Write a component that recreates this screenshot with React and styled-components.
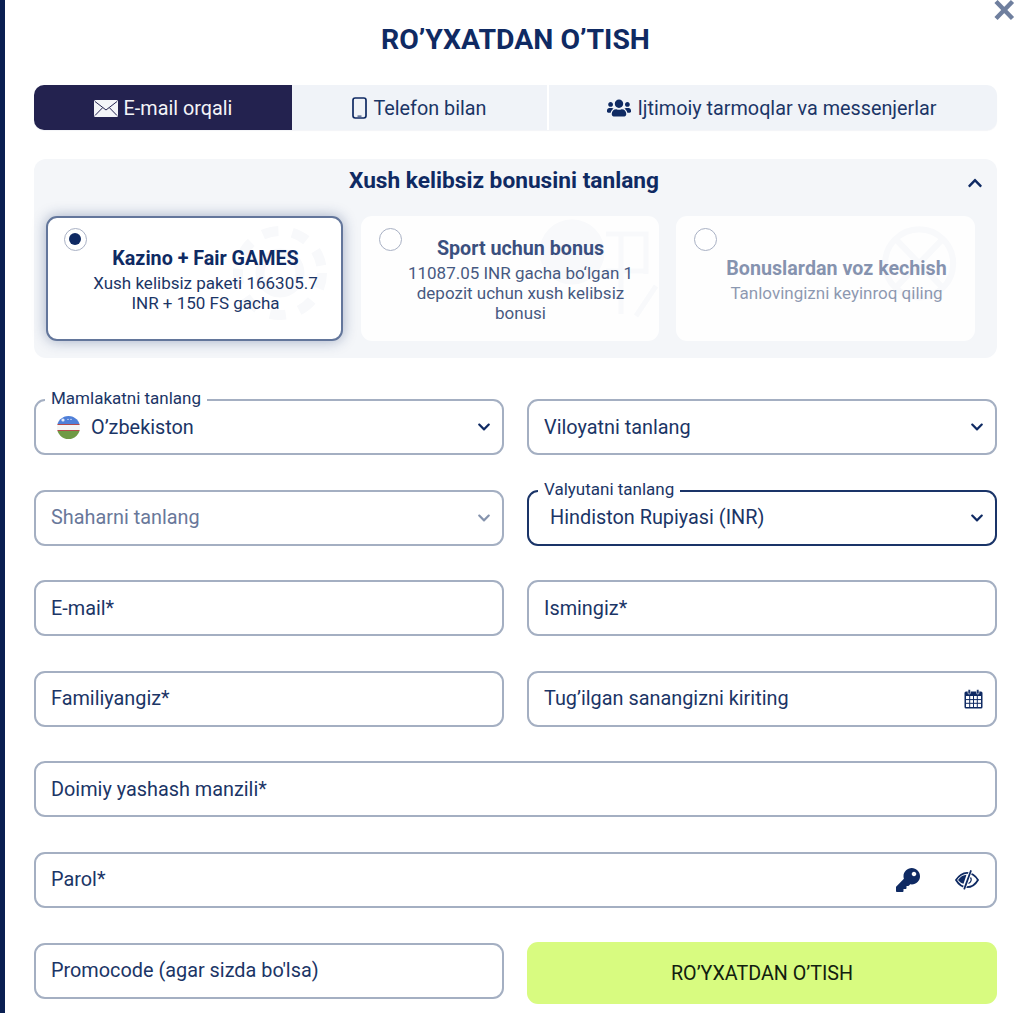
import React from "react";
import styled, { createGlobalStyle } from "styled-components";
import { FaUsers, FaKey, FaChevronDown, FaChevronUp } from "react-icons/fa";

const navy = "#0f2a63";

const GlobalStyle = createGlobalStyle`
  html, body {
    margin: 0;
    height: 100%;
    background: #ffffff;
  }
  body {
    font-family: Roboto, "Liberation Sans", sans-serif;
    color: ${navy};
    overflow: hidden;
  }
  * {
    box-sizing: border-box;
  }
`;

const Page = styled.div`
  display: flex;
  height: 1013px;
`;

const SideEdge = styled.div`
  width: 5px;
  background: #0a1f52;
  flex-shrink: 0;
`;

const Modal = styled.div`
  position: relative;
  flex: 1;
  padding: 0 27px 0 29px;
`;

const CloseButton = styled.button`
  position: absolute;
  top: 0;
  right: 9px;
  width: 22px;
  height: 22px;
  padding: 0;
  border: none;
  background: none;
  color: #6f7f9e;
`;

const Title = styled.h1`
  margin: 0;
  height: 85px;
  padding-top: 23px;
  font-size: 28.4px;
  line-height: 34px;
  font-weight: 700;
  text-align: center;
  letter-spacing: 0;
`;

const Tabs = styled.div`
  display: grid;
  grid-template-columns: 258px 255px 448px;
  column-gap: 0;
  height: 45px;
  border-radius: 10px;
  background: #f0f3f8;
  overflow: hidden;
  box-shadow: 0 1px 1px rgba(15, 42, 99, 0.05);
`;

const Tab = styled.div`
  display: flex;
  align-items: center;
  justify-content: center;
  gap: 6px;
  padding-top: 1px;
  font-size: 19.8px;
  background: ${(p) => (p.$active ? "#23224f" : "transparent")};
  color: ${(p) => (p.$active ? "#f3f4f8" : "#1b3566")};
  border-left: ${(p) => (p.$divided ? "2px solid #ffffff" : "none")};
`;

const BonusPanel = styled.section`
  margin-top: 29px;
  height: 199px;
  padding: 0 22px 0 12px;
  border-radius: 12px;
  background: #f4f6f9;
`;

const BonusHeader = styled.div`
  position: relative;
  height: 57px;
  padding-top: 6px;
  padding-right: 13px;
  font-size: 22.7px;
  line-height: 32px;
  font-weight: 700;
  text-align: center;
`;

const CollapseIcon = styled.span`
  position: absolute;
  right: -8px;
  top: 16px;
  font-size: 16px;
  line-height: 16px;
`;

const Cards = styled.div`
  display: grid;
  grid-template-columns: 297px 298px 299px;
  justify-content: space-between;
`;

const Card = styled.div`
  position: relative;
  height: 125px;
  padding: ${(p) => p.$top}px 0 0 22px;
  background: ${(p) => (p.$selected ? "#ffffff" : "rgba(255, 255, 255, 0.85)")};
  border: ${(p) => (p.$selected ? "2px solid #63769b" : "none")};
  border-radius: 11px;
  box-shadow: ${(p) => (p.$selected ? "0 0 14px rgba(30, 55, 110, 0.38)" : "none")};
  text-align: center;
  overflow: hidden;
`;

const Watermark = styled.svg`
  position: absolute;
  top: 0;
  left: ${(p) => p.$left}px;
  width: 125px;
  height: 125px;
  color: #f8f9fb;
`;

const Radio = styled.span`
  position: absolute;
  top: ${(p) => (p.$selected ? "10px" : "12px")};
  left: ${(p) => (p.$selected ? "16px" : "18px")};
  width: 23px;
  height: 23px;
  border: 1.5px solid #a9b1c4;
  border-radius: 50%;
  background: #ffffff;

  &::after {
    content: "";
    display: ${(p) => (p.$selected ? "block" : "none")};
    width: 12px;
    height: 12px;
    margin: 4px;
    border-radius: 50%;
    background: ${navy};
  }
`;

const CardBody = styled.div`
  position: relative;
  opacity: ${(p) => p.$fade};
`;

const CardTitle = styled.div`
  font-size: 19.7px;
  line-height: 24px;
  font-weight: 700;
`;

const CardText = styled.div`
  margin-top: 2px;
  font-size: 17px;
  line-height: 20px;
  color: #1b3566;
`;

const FormGrid = styled.form`
  display: grid;
  grid-template-columns: 470px 470px;
  grid-auto-rows: 56px;
  column-gap: 23px;
  row-gap: 34.6px;
  margin-top: 41px;
`;

const Field = styled.div`
  position: relative;
  display: flex;
  align-items: center;
  gap: 11px;
  height: 56px;
  padding: 0 15px;
  grid-column: ${(p) => (p.$wide ? "1 / -1" : "auto")};
  border: 2px solid ${(p) => (p.$focused ? "#1a3468" : "#a4afc2")};
  border-radius: 11px;
  font-size: 19.85px;
  color: ${(p) => (p.$muted ? "#69789a" : "#1b3566")};
  background: #ffffff;
`;

const FieldValue = styled.span`
  flex: 1;
  padding-left: ${(p) => p.$indent || 0}px;
`;

const Legend = styled.span`
  position: absolute;
  top: -13px;
  left: 9px;
  padding: 0 6px;
  font-size: 17px;
  line-height: 20px;
  color: #1b3566;
  background: #ffffff;
`;

const Arrow = styled.span`
  display: flex;
  margin-right: -4px;
  font-size: 14px;
  color: ${(p) => (p.$muted ? "#8593ad" : navy)};
`;

const IconSlot = styled.span`
  display: flex;
  margin-left: ${(p) => p.$gap || 0}px;
  margin-right: ${(p) => p.$end || 0}px;
  color: ${navy};
`;

const SubmitButton = styled.button`
  height: 62px;
  margin-top: -1px;
  border: none;
  border-radius: 11px;
  background: #d8fb80;
  color: #11200f;
  font-family: inherit;
  font-size: 19.7px;
  padding-top: 2px;
`;

const EnvelopeIcon = () => (
  <svg width="24" height="17" viewBox="0 0 24 17">
    <rect x="0" y="0" width="24" height="17" rx="1.5" fill="#f3f4f8" />
    <path d="M1 1.5 L12 10 L23 1.5 M1 15.5 L8.5 7.8 M23 15.5 L15.5 7.8" fill="none" stroke="#23224f" strokeWidth="1" />
  </svg>
);

const PhoneIcon = () => (
  <svg width="15" height="22" viewBox="0 0 15 22">
    <rect x="1" y="1" width="13" height="20" rx="2.2" fill="none" stroke={navy} strokeWidth="1.7" />
    <rect x="5.5" y="18.6" width="4" height="1" fill={navy} />
  </svg>
);

const CalendarIcon = () => (
  <svg width="19" height="20" viewBox="0 0 19 20">
    <rect x="0.5" y="2.5" width="18" height="17" rx="1.5" fill={navy} />
    <rect x="4" y="0.5" width="2.4" height="4.5" rx="1" fill={navy} stroke="#ffffff" strokeWidth="0.6" />
    <rect x="12.6" y="0.5" width="2.4" height="4.5" rx="1" fill={navy} stroke="#ffffff" strokeWidth="0.6" />
    <path
      d="M2 7h15v11h-15z"
      fill="#ffffff"
    />
    <path
      d="M2 10.6h15M2 14.3h15M5.7 7v11M9.5 7v11M13.3 7v11"
      stroke={navy}
      strokeWidth="1"
    />
  </svg>
);

const EyeOffIcon = () => (
  <svg width="24" height="20" viewBox="0 0 24 20">
    <path d="M1 10 C5 4 9 2.8 12 2.8 C15 2.8 19.5 4 23 10 C19.5 16 15 17.2 12 17.2 C9 17.2 4.5 16 1 10 Z" fill="none" stroke={navy} strokeWidth="1.8" />
    <path d="M3 10 C5.5 6.5 8.5 5 11.5 4.8 L8.5 13.8 C6.5 13.2 4.5 12 3 10 Z" fill={navy} />
    <path d="M15.8 0.8 L9.2 19" stroke="#ffffff" strokeWidth="3.4" />
    <path d="M15.8 1 L9.4 18.6" stroke={navy} strokeWidth="1.8" strokeLinecap="round" />
    <path d="M15.5 7.5 C17 9.5 16 12.5 13.5 13.5" fill="none" stroke={navy} strokeWidth="1.3" />
  </svg>
);

const UzbekFlag = () => (
  <svg width="23" height="23" viewBox="0 0 23 23">
    <defs>
      <clipPath id="flag-clip">
        <circle cx="11.5" cy="11.5" r="11.5" />
      </clipPath>
    </defs>
    <g clipPath="url(#flag-clip)">
      <rect width="23" height="8" fill="#4f7fd8" />
      <rect y="8" width="23" height="1" fill="#b34a4a" />
      <rect y="9" width="23" height="5" fill="#f5f5f5" />
      <rect y="14" width="23" height="1" fill="#b34a4a" />
      <rect y="15" width="23" height="8" fill="#6f9a45" />
      <circle cx="6" cy="4" r="1.6" fill="#dfe8fa" />
      <circle cx="11" cy="3.4" r="0.7" fill="#dfe8fa" />
      <circle cx="14" cy="3.4" r="0.7" fill="#dfe8fa" />
    </g>
  </svg>
);

const ChipMark = () => (
  <g fill="none" stroke="currentColor">
    <circle cx="62" cy="55" r="42" strokeWidth="10" strokeDasharray="16 14" />
    <circle cx="62" cy="55" r="20" strokeWidth="9" />
  </g>
);

const BallMark = () => (
  <g fill="none" stroke="currentColor" strokeWidth="5">
    <circle cx="36" cy="36" r="30" fill="currentColor" />
    <path d="M70 18h40v40M70 55h40M85 18v80M100 100l20-30" />
  </g>
);

const CrossMark = () => (
  <g fill="none" stroke="currentColor" strokeWidth="9" transform="translate(26 10) scale(0.68)">
    <circle cx="62" cy="55" r="50" />
    <path d="M30 22 L94 88 M94 22 L30 88" />
  </g>
);

const DownArrow = ({ muted }) => (
  <Arrow $muted={muted}>
    <FaChevronDown />
  </Arrow>
);

const App = () => {
  return (
    <Page>
      <GlobalStyle />
      <SideEdge />
      <Modal>
        <CloseButton aria-label="close">
          <svg width="22" height="22" viewBox="0 0 22 22">
            <path d="M3 1.5 L19.5 18.5 M19.5 1.5 L3 18.5" stroke="currentColor" strokeWidth="4.4" />
          </svg>
        </CloseButton>
        <Title>RO’YXATDAN O’TISH</Title>

        <Tabs>
          <Tab $active>
            <EnvelopeIcon />
            E-mail orqali
          </Tab>
          <Tab>
            <PhoneIcon />
            Telefon bilan
          </Tab>
          <Tab $divided>
            <FaUsers size={24} color={navy} />
            Ijtimoiy tarmoqlar va messenjerlar
          </Tab>
        </Tabs>

        <BonusPanel>
          <BonusHeader>
            Xush kelibsiz bonusini tanlang
            <CollapseIcon>
              <FaChevronUp />
            </CollapseIcon>
          </BonusHeader>
          <Cards>
            <Card $selected $top={29}>
              <Watermark $left={170} viewBox="0 0 125 125">
                <ChipMark />
              </Watermark>
              <Radio $selected />
              <CardBody $fade={1}>
                <CardTitle>Kazino + Fair GAMES</CardTitle>
                <CardText>
                  Xush kelibsiz paketi 166305.7
                  <br />
                  INR + 150 FS gacha
                </CardText>
              </CardBody>
            </Card>
            <Card $top={21}>
              <Watermark $left={175} viewBox="0 0 125 125">
                <BallMark />
              </Watermark>
              <Radio />
              <CardBody $fade={0.82}>
                <CardTitle>Sport uchun bonus</CardTitle>
                <CardText>
                  11087.05 INR gacha bo‘lgan 1
                  <br />
                  depozit uchun xush kelibsiz
                  <br />
                  bonusi
                </CardText>
              </CardBody>
            </Card>
            <Card $top={41}>
              <Watermark $left={175} viewBox="0 0 125 125">
                <CrossMark />
              </Watermark>
              <Radio />
              <CardBody $fade={0.5}>
                <CardTitle>Bonuslardan voz kechish</CardTitle>
                <CardText>Tanlovingizni keyinroq qiling</CardText>
              </CardBody>
            </Card>
          </Cards>
        </BonusPanel>

        <FormGrid>
          <Field>
            <Legend>Mamlakatni tanlang</Legend>
            <IconSlot $gap={6}>
              <UzbekFlag />
            </IconSlot>
            <FieldValue>O’zbekiston</FieldValue>
            <DownArrow />
          </Field>
          <Field>
            <FieldValue>Viloyatni tanlang</FieldValue>
            <DownArrow />
          </Field>
          <Field $muted>
            <FieldValue>Shaharni tanlang</FieldValue>
            <DownArrow muted />
          </Field>
          <Field $focused>
            <Legend>Valyutani tanlang</Legend>
            <FieldValue $indent={6}>Hindiston Rupiyasi (INR)</FieldValue>
            <DownArrow />
          </Field>
          <Field>
            <FieldValue>E-mail*</FieldValue>
          </Field>
          <Field>
            <FieldValue>Ismingiz*</FieldValue>
          </Field>
          <Field>
            <FieldValue>Familiyangiz*</FieldValue>
          </Field>
          <Field>
            <FieldValue>Tug’ilgan sanangizni kiriting</FieldValue>
            <IconSlot $end={-3}>
              <CalendarIcon />
            </IconSlot>
          </Field>
          <Field $wide>
            <FieldValue>Doimiy yashash manzili*</FieldValue>
          </Field>
          <Field $wide>
            <FieldValue>Parol*</FieldValue>
            <IconSlot>
              <FaKey size={24} />
            </IconSlot>
            <IconSlot $gap={24} $end={1}>
              <EyeOffIcon />
            </IconSlot>
          </Field>
          <Field>
            <FieldValue>Promocode (agar sizda bo'lsa)</FieldValue>
          </Field>
          <SubmitButton type="button">RO’YXATDAN O’TISH</SubmitButton>
        </FormGrid>
      </Modal>
    </Page>
  );
};

export default App;
